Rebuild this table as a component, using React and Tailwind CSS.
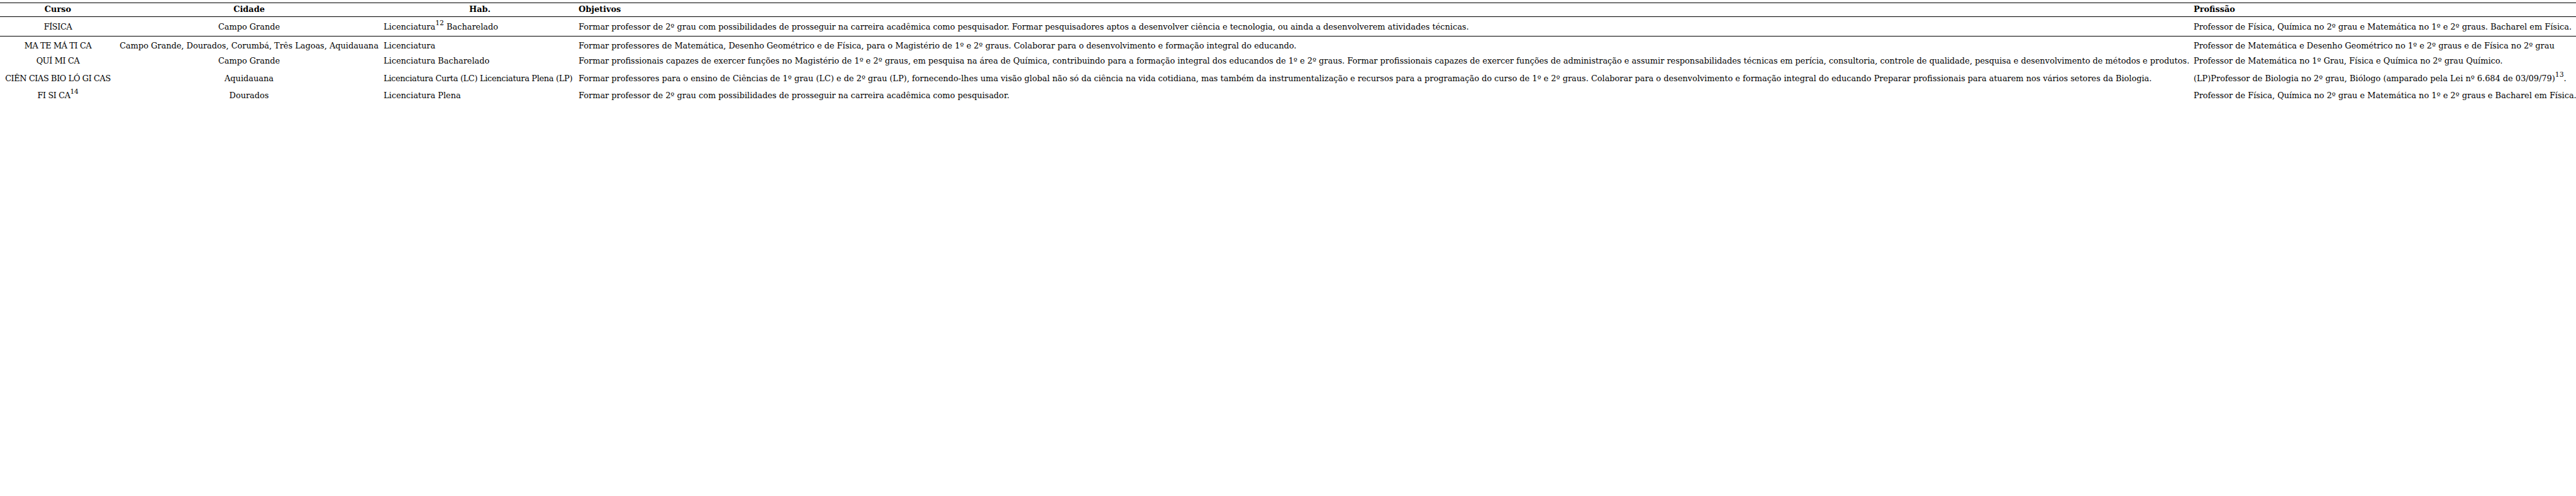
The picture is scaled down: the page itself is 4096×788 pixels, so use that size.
// Tabela de cursos de licenciatura (Curso / Cidade / Hab. / Objetivos / Profissão)

const CURSOS = [
  {
    curso: 'FÍSICA',
    cidade: 'Campo Grande',
    hab: <>Licenciatura<Sup>12</Sup> Bacharelado</>,
    objetivos: 'Formar professor de 2º grau com possibilidades de prosseguir na carreira acadêmica como pesquisador. Formar pesquisadores aptos a desenvolver ciência e tecnologia, ou ainda a desenvolverem atividades técnicas.',
    profissao: 'Professor de Física, Química no 2º grau e Matemática no 1º e 2º graus. Bacharel em Física.',
    linha: true,
  },
  {
    curso: 'MA TE MÁ TI CA',
    cidade: 'Campo Grande, Dourados, Corumbá, Três Lagoas, Aquidauana',
    hab: 'Licenciatura',
    objetivos: 'Formar professores de Matemática, Desenho Geométrico e de Física, para o Magistério de 1º e 2º graus. Colaborar para o desenvolvimento e formação integral do educando.',
    profissao: 'Professor de Matemática e Desenho Geométrico no 1º e 2º graus e de Física no 2º grau',
  },
  {
    curso: 'QUÍ MI CA',
    cidade: 'Campo Grande',
    hab: 'Licenciatura Bacharelado',
    objetivos: 'Formar profissionais capazes de exercer funções no Magistério de 1º e 2º graus, em pesquisa na área de Química, contribuindo para a formação integral dos educandos de 1º e 2º graus. Formar profissionais capazes de exercer funções de administração e assumir responsabilidades técnicas em perícia, consultoria, controle de qualidade, pesquisa e desenvolvimento de métodos e produtos.',
    profissao: 'Professor de Matemática no 1º Grau, Física e Química no 2º grau Químico.',
  },
  {
    curso: 'CIÊN CIAS BIO LÓ GI CAS',
    cidade: 'Aquidauana',
    hab: 'Licenciatura Curta (LC) Licenciatura Plena (LP)',
    habApertado: true,
    objetivos: 'Formar professores para o ensino de Ciências de 1º grau (LC) e de 2º grau (LP), fornecendo-lhes uma visão global não só da ciência na vida cotidiana, mas também da instrumentalização e recursos para a programação do curso de 1º e 2º graus. Colaborar para o desenvolvimento e formação integral do educando Preparar profissionais para atuarem nos vários setores da Biologia.',
    profissao: <>(LP)Professor de Biologia no 2º grau, Biólogo (amparado pela Lei nº 6.684 de 03/09/79)<Sup>13</Sup>.</>,
  },
  {
    curso: <>FI SI CA<Sup>14</Sup></>,
    cidade: 'Dourados',
    hab: 'Licenciatura Plena',
    objetivos: 'Formar professor de 2º grau com possibilidades de prosseguir na carreira acadêmica como pesquisador.',
    profissao: 'Professor de Física, Química no 2º grau e Matemática no 1º e 2º graus e Bacharel em Física.',
  },
];

function Sup({ children }) {
  return <span className="align-[7px] text-[10.8px] leading-none">{children}</span>;
}

export default function App() {
  return (
    <div className="min-h-[788px] w-[4096px] bg-white pt-[4px] font-['DejaVu_Serif',serif] text-[12.9px] leading-[15px] text-black">
      <table className="w-[4096px] table-fixed border-collapse whitespace-nowrap">
        <colgroup>
          <col className="w-[184px]" />
          <col className="w-[424px]" />
          <col className="w-[310px]" />
          <col className="w-[2568px]" />
          <col className="w-[610px]" />
        </colgroup>
        <thead>
          <tr className="border-y border-black font-bold">
            <th className="px-[2px] pt-[2px] pb-[4px] text-center">Curso</th>
            <th className="px-[2px] pt-[2px] pb-[4px] text-center">Cidade</th>
            <th className="px-[2px] pt-[2px] pb-[4px] text-center">Hab.</th>
            <th className="px-[2px] pt-[2px] pb-[4px] text-left">Objetivos</th>
            <th className="px-[2px] pt-[2px] pb-[4px] text-left">Profissão</th>
          </tr>
        </thead>
        <tbody>
          {CURSOS.map((c, i) => {
            const td = c.linha
              ? 'px-[2px] pt-[5px] pb-[7.3px] align-baseline'
              : 'px-[2px] pt-[6.6px] pb-[2.9px] align-baseline';
            return (
              <tr key={i} className={c.linha ? 'border-b border-black' : ''}>
                <td className={`${td} text-center tracking-[-0.4px]`}>{c.curso}</td>
                <td className={`${td} text-center`}>{c.cidade}</td>
                <td className={`${td} text-left ${c.habApertado ? 'tracking-[-0.3px]' : ''}`}>{c.hab}</td>
                <td className={`${td} text-left`}>{c.objetivos}</td>
                <td className={`${td} text-left`}>{c.profissao}</td>
              </tr>
            );
          })}
        </tbody>
      </table>
    </div>
  );
}
